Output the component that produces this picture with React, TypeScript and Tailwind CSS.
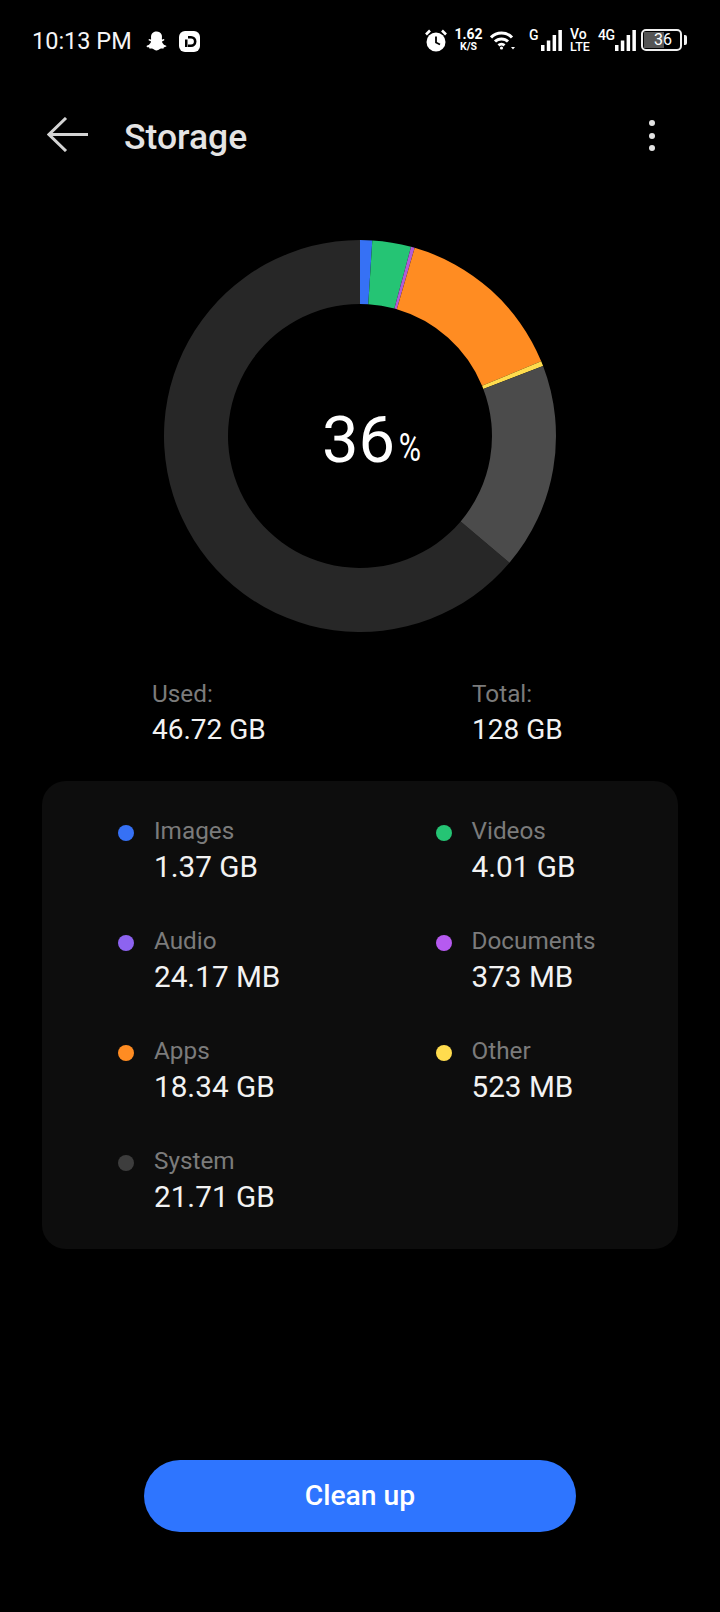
import React from "react";
import { FaSnapchatGhost } from "react-icons/fa";

const font = { fontFamily: "Roboto, sans-serif" };
const CX = 200, CY = 200, R = 196, r = 132;

function arc(a0: number, a1: number) {
  const p = (rad: number, a: number) => {
    const t = (a * Math.PI) / 180;
    return `${(CX + rad * Math.sin(t)).toFixed(2)} ${(CY - rad * Math.cos(t)).toFixed(2)}`;
  };
  const large = a1 - a0 > 180 ? 1 : 0;
  return `M${p(R, a0)}A${R} ${R} 0 ${large} 1 ${p(R, a1)}L${p(r, a1)}A${r} ${r} 0 ${large} 0 ${p(r, a0)}Z`;
}

const segments: [number, number, string][] = [
  [130.3, 360, "#272727"],
  [0, 3.6, "#3671f5"],
  [3.6, 15.1, "#25c474"],
  [15.1, 16.2, "#b05cd8"],
  [16.2, 67.6, "#ff8c22"],
  [67.6, 69.1, "#ffdc4e"],
  [69.1, 130.3, "#4b4b4b"],
];

const items = [
  ["Images", "1.37 GB", "bg-[#3671f5]", "Videos", "4.01 GB", "bg-[#25c474]"],
  ["Audio", "24.17 MB", "bg-[#8d63f0]", "Documents", "373 MB", "bg-[#b65af0]"],
  ["Apps", "18.34 GB", "bg-[#ff8c22]", "Other", "523 MB", "bg-[#ffdc4e]"],
  ["System", "21.71 GB", "bg-[#3d3d3d]"],
];

function Bars() {
  return (
    <svg width="21" height="21" viewBox="0 0 21 21" fill="#fff">
      <rect x="0" y="15" width="3.5" height="6" />
      <rect x="5.8" y="10.5" width="3.5" height="10.5" />
      <rect x="11.6" y="5" width="3.5" height="16" />
      <rect x="17.4" y="0" width="3.5" height="21" />
    </svg>
  );
}

function Stat({ label, value, dot }: { label: string; value: string; dot?: string }) {
  return (
    <div className="flex w-[317.5px]">
      <div className="w-[112px] h-[72px] flex justify-end pr-[20px] pt-[12px]">
        {dot && <span className={`w-4 h-4 rounded-full ${dot}`} />}
      </div>
      <div>
        <div className="text-[24.3px] leading-[36px] text-[#7b7b7b]">{label}</div>
        <div className="text-[29.7px] leading-[36px] text-[#f2f2f2]">{value}</div>
      </div>
    </div>
  );
}

export default function App() {
  return (
    <div className="w-[720px] h-[1612px] bg-black overflow-hidden flex flex-col" style={font}>
      {/* status bar */}
      <div className="h-[80px] flex items-center pl-[32px] text-white">
        <span className="text-[23.5px] leading-none w-[115px] mt-[3px] text-[#f5f5f5]">10:13 PM</span>
        <FaSnapchatGhost className="w-[21px] h-[20px] ml-[-1px] mt-[2px]" />
        <svg className="ml-[12px] mt-[2px]" width="21" height="21" viewBox="0 0 21 21">
          <rect width="21" height="21" rx="6" fill="#fff" />
          <path d="M9 5h3a5.5 5.5 0 0 1 0 11H9v-2.6h3a2.9 2.9 0 0 0 0-5.8H9z" fill="#000" />
          <rect x="6" y="8.5" width="2.5" height="7.5" fill="#000" />
        </svg>
        <svg className="ml-[225px]" width="22" height="23" viewBox="0 0 22 23">
          <circle cx="11" cy="13" r="9.5" fill="#fff" />
          <path d="M11 7.5V13.5L15 15.5" stroke="#000" strokeWidth="1.8" fill="none" />
          <path d="M1 5.5 5 1.5M21 5.5 17 1.5" stroke="#fff" strokeWidth="2.6" />
        </svg>
        <div className="ml-[8px] w-[27px] flex flex-col items-center font-bold text-white">
          <span className="text-[14px] leading-[12px]">1.62</span>
          <span className="text-[10.5px] leading-[12px] mt-[1px]">K/S</span>
        </div>
        <svg className="ml-[8px]" width="25" height="19" viewBox="0 0 25 19" fill="none" stroke="#fff" strokeWidth="3">
          <path d="M1 6.5C6.5 .6 16.5 .6 22 6.5" />
          <path d="M5 10.5C8.5 7 14.5 7 18 10.5" />
          <path d="M8.5 14.3C10.2 12.8 12.8 12.8 14.5 14.3" />
          <circle cx="11.5" cy="17" r="1.6" fill="#fff" stroke="none" />
          <path d="M21 16h4l-2 2.6z" fill="#fff" stroke="none" />
        </svg>
        <span className="ml-[14px] mb-[10px] w-[12px] text-[14px] font-medium leading-none">G</span>
        <Bars />
        <div className="ml-[8px] w-[21px] flex flex-col font-medium leading-none">
          <span className="text-[14px] leading-[12px]">Vo</span>
          <span className="text-[12.5px] leading-[11px] mt-[1px]">LTE</span>
        </div>
        <span className="ml-[7px] mb-[10px] w-[17px] text-[14px] font-medium leading-none tracking-tight">4G</span>
        <Bars />
        <div className="relative ml-[5px] w-[41px] h-[22px] border-2 border-[#f0f0f0] rounded-[5px] flex items-center justify-center overflow-hidden">
          <span className="absolute left-[1px] top-[1px] bottom-[1px] w-[20px] bg-[#555]" />
          <span className="relative text-[16px] leading-none ml-[3px]">36</span>
        </div>
        <span className="ml-[2px] w-[3px] h-[10px] rounded-r-[2px] bg-[#f0f0f0]" />
      </div>

      {/* header */}
      <div className="h-[114px] flex items-start text-[#e4e4e4]">
        <svg className="ml-[47px] mt-[37px]" width="41" height="35" viewBox="0 0 41 35" fill="none" stroke="#d4d4d4" strokeWidth="3">
          <path d="M41 17.5H2" />
          <path d="M19 1 2 17.5 19 34" />
        </svg>
        <span className="ml-[36px] mt-[35px] text-[35.5px] leading-[44px] font-medium">Storage</span>
        <div className="ml-auto mr-[65px] mt-[40px] flex flex-col gap-[6.5px]">
          <span className="w-[6px] h-[6px] rounded-full bg-[#e4e4e4]" />
          <span className="w-[6px] h-[6px] rounded-full bg-[#e4e4e4]" />
          <span className="w-[6px] h-[6px] rounded-full bg-[#e4e4e4]" />
        </div>
      </div>

      {/* donut */}
      <div className="relative w-[400px] h-[400px] ml-[160px] mt-[42px]">
        <svg width="400" height="400" viewBox="0 0 400 400">
          {segments.map(([a, b, c]) => (
            <path key={c} d={arc(a, b)} fill={c} />
          ))}
        </svg>
        <div className="absolute inset-0 flex items-center justify-center text-white pt-[8px]">
          <span className="text-[65px] leading-none ml-[26px]">36</span>
          <span className="text-[38px] leading-none mt-[15px] ml-[1px] scale-x-[0.8]">%</span>
        </div>
      </div>

      {/* totals */}
      <div className="flex pl-[152px] mt-[40px]">
        <div className="w-[320px]">
          <div className="text-[24.3px] leading-[36px] text-[#7b7b7b]">Used:</div>
          <div className="text-[28px] leading-[36px] text-[#f2f2f2]">46.72 GB</div>
        </div>
        <div>
          <div className="text-[24.3px] leading-[36px] text-[#7b7b7b]">Total:</div>
          <div className="text-[28px] leading-[36px] text-[#f2f2f2]">128 GB</div>
        </div>
      </div>

      {/* breakdown card */}
      <div className="mx-[42px] mt-[33px] h-[468px] rounded-[24px] bg-[#0d0d0d] pt-[32px] flex flex-col gap-[38px]">
        {items.map((row) => (
          <div key={row[0]} className="flex">
            <Stat label={row[0]} value={row[1]} dot={row[2]} />
            {row[3] && <Stat label={row[3]} value={row[4]} dot={row[5]} />}
          </div>
        ))}
      </div>

      {/* button */}
      <div className="mt-[211px] flex justify-center">
        <button className="w-[432px] h-[72px] rounded-full bg-[#2e75ff] text-white text-[28.3px] font-medium">Clean up</button>
      </div>
    </div>
  );
}
